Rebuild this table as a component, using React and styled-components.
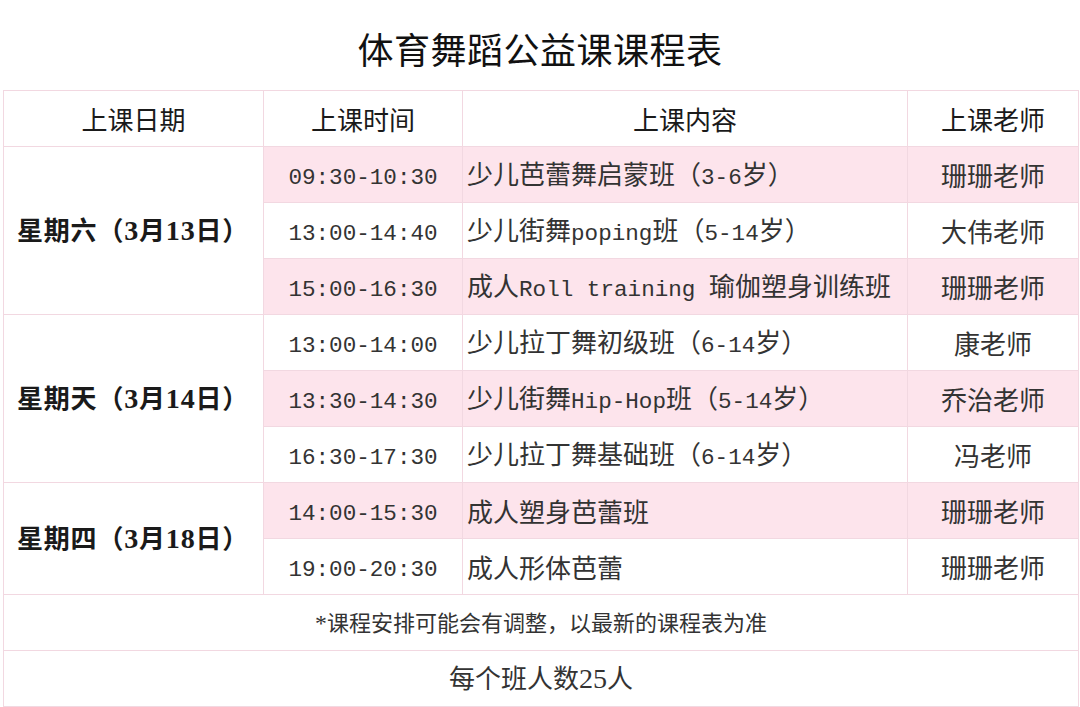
import React from "react";
import styled, { createGlobalStyle } from "styled-components";

const GlobalStyle = createGlobalStyle`
  html, body {
    margin: 0;
    padding: 0;
    background: #ffffff;
  }
  body {
    font-family: "Noto Sans CJK SC", "DejaVu Sans", sans-serif;
    color: #222;
  }
`;

const line = "#f2d8e1";
const pink = "#fde4ec";

const schedule = [
  {
    date: "星期六（3月13日）",
    classes: [
      { time: "09:30-10:30", content: "少儿芭蕾舞启蒙班（3-6岁）", teacher: "珊珊老师", pink: true },
      { time: "13:00-14:40", content: "少儿街舞poping班（5-14岁）", teacher: "大伟老师" },
      { time: "15:00-16:30", content: "成人Roll training 瑜伽塑身训练班", teacher: "珊珊老师", pink: true },
    ],
  },
  {
    date: "星期天（3月14日）",
    classes: [
      { time: "13:00-14:00", content: "少儿拉丁舞初级班（6-14岁）", teacher: "康老师" },
      { time: "13:30-14:30", content: "少儿街舞Hip-Hop班（5-14岁）", teacher: "乔治老师", pink: true },
      { time: "16:30-17:30", content: "少儿拉丁舞基础班（6-14岁）", teacher: "冯老师" },
    ],
  },
  {
    date: "星期四（3月18日）",
    classes: [
      { time: "14:00-15:30", content: "成人塑身芭蕾班", teacher: "珊珊老师", pink: true },
      { time: "19:00-20:30", content: "成人形体芭蕾", teacher: "珊珊老师" },
    ],
  },
];

// split half-width runs so they can get their own (SimSun-like) font
function Mixed({ text, $kind }) {
  const parts = text.split(/([\x20-\x7E]+)/).filter(Boolean);
  return parts.map((p, i) =>
    /^[\x20-\x7E]+$/.test(p) ? (
      <Ascii key={i} $kind={$kind}>
        {p}
      </Ascii>
    ) : (
      <React.Fragment key={i}>{p}</React.Fragment>
    )
  );
}

export default function App() {
  return (
    <Page>
      <GlobalStyle />
      <Title>体育舞蹈公益课课程表</Title>
      <Table>
        <colgroup>
          <col style={{ width: 260 }} />
          <col style={{ width: 199 }} />
          <col style={{ width: 445 }} />
          <col style={{ width: 171 }} />
        </colgroup>
        <thead>
          <Row>
            <HeadCell>上课日期</HeadCell>
            <HeadCell>上课时间</HeadCell>
            <HeadCell>上课内容</HeadCell>
            <HeadCell>上课老师</HeadCell>
          </Row>
        </thead>
        <tbody>
          {schedule.map((day) =>
            day.classes.map((c, i) => (
              <Row key={day.date + c.time}>
                {i === 0 && (
                  <DateCell rowSpan={day.classes.length}>
                    <Mixed text={day.date} $kind="bold" />
                  </DateCell>
                )}
                <TimeCell $pink={c.pink}>
                  <Mixed text={c.time} $kind="mono" />
                </TimeCell>
                <ContentCell $pink={c.pink}>
                  <Mixed text={c.content} $kind="mono" />
                </ContentCell>
                <TeacherCell $pink={c.pink}>{c.teacher}</TeacherCell>
              </Row>
            ))
          )}
          <Row>
            <NoteCell colSpan={4} $small>
              <Mixed text="*课程安排可能会有调整，以最新的课程表为准" $kind="serif" />
            </NoteCell>
          </Row>
          <Row>
            <NoteCell colSpan={4}>
              <Mixed text="每个班人数25人" $kind="serif" />
            </NoteCell>
          </Row>
        </tbody>
      </Table>
    </Page>
  );
}

const Page = styled.div`
  width: 1080px;
  height: 707px;
  overflow: hidden;
  background: #fff;
`;

const Title = styled.h1`
  margin: 0;
  height: 90px;
  display: flex;
  align-items: center;
  justify-content: center;
  padding-top: 6px;
  box-sizing: border-box;
  font-size: 36px;
  font-weight: 400;
  color: #111;
  letter-spacing: 0.5px;
`;

const Table = styled.table`
  margin-left: 3px;
  width: 1075px;
  table-layout: fixed;
  border-collapse: collapse;
`;

const Row = styled.tr`
  height: 56px;
`;

const Cell = styled.td`
  border: 1px solid ${line};
  padding: 0 4px;
  height: 55px;
  font-size: 26px;
  font-weight: 400;
  line-height: 1;
  color: #333;
  background: ${(p) => (p.$pink ? pink : "#fff")};
  white-space: nowrap;
  vertical-align: middle;
`;

const HeadCell = styled(Cell).attrs({ as: "th" })`
  text-align: center;
  color: #1a1a1a;
  font-size: 26px;
`;

const DateCell = styled(Cell)`
  text-align: left;
  padding-left: 13px;
  font-weight: 700;
  color: #1a1a1a;
  letter-spacing: 0.8px;
`;

const TimeCell = styled(Cell)`
  text-align: center;
`;

const ContentCell = styled(Cell)`
  text-align: left;
  padding-left: 4px;
`;

const TeacherCell = styled(Cell)`
  text-align: center;
`;

const NoteCell = styled(Cell)`
  text-align: center;
  font-size: ${(p) => (p.$small ? "22px" : "26px")};
`;

const Ascii = styled.span`
  font-family: ${(p) =>
    p.$kind === "mono"
      ? `"Liberation Mono", monospace`
      : `"Liberation Serif", serif`};
  font-size: ${(p) => (p.$kind === "mono" ? "0.87em" : "1.08em")};
  font-weight: ${(p) => (p.$kind === "bold" ? 700 : 400)};
`;
